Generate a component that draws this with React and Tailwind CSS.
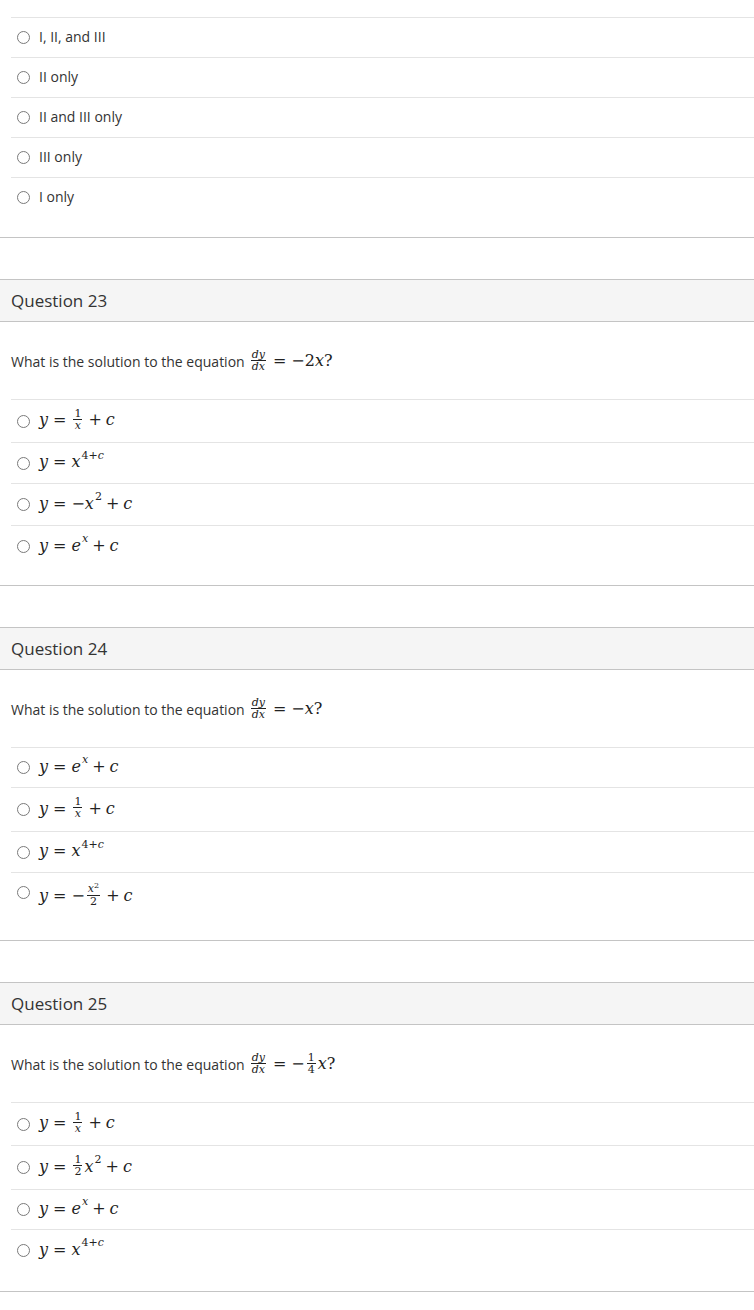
const sans = "font-['Open_Sans']";

function Radio({ className = "" }) {
  return (
    <span
      className={`inline-block w-[13px] h-[13px] rounded-full border border-[#7a7a7a] bg-white shrink-0 ${className}`}
    />
  );
}

// math helpers
function M({ children }) {
  return (
    <span className="inline-flex items-center font-['DejaVu_Serif'] font-normal text-[16px] leading-none text-[#222]">
      {children}
    </span>
  );
}
const V = ({ children }) => <span className="italic">{children}</span>;
const Op = ({ children, wide }) => (
  <span className={wide ? "mx-[5px]" : "mx-[4px]"}>{children}</span>
);
const Sup = ({ children }) => (
  <span className="text-[11px] relative -top-[7px] ml-[1px]">{children}</span>
);
function Frac({ top, bottom }) {
  return (
    <span className="inline-flex flex-col items-center text-[11px] leading-[11px] mx-[2px] relative -top-[1px]">
      <span className="px-[1px]">{top}</span>
      <span className="self-stretch border-t border-[#222]" />
      <span className="px-[1px]">{bottom}</span>
    </span>
  );
}

function Answer({ h, children, radioClass }) {
  return (
    <div
      className={`flex items-center border-t border-[#e4e4e4] pl-[6px] gap-[9px] ${h}`}
    >
      <Radio className={radioClass} />
      <div className="text-[14px] flex items-center -mt-[2px]">{children}</div>
    </div>
  );
}

function Question({ num, prompt, answers, lastPad }) {
  return (
    <div className="mt-[41px]">
      <div className="h-[43px] border-y border-[#c4c4c4] bg-[#f5f5f5] px-[11px] flex items-center text-[17px]">
        Question {num}
      </div>
      <div className={`border-b border-[#c4c4c4] ${lastPad}`}>
        <div className="h-[77px] pt-[29px] px-[11px]">
          <div className="h-[20px] flex items-center text-[14px]">
            <span className="mr-[4px]">What is the solution to the equation</span>
            {prompt}
          </div>
        </div>
        <div className="ml-[11px]">
          {answers.map((a, i) => (
            <Answer key={i} h={a.h} radioClass={a.radioClass}>
              {a.content}
            </Answer>
          ))}
        </div>
      </div>
    </div>
  );
}

const dydx = <Frac top={<V>dy</V>} bottom={<V>dx</V>} />;

const yEq = (
  <>
    <V>y</V>
    <Op wide>=</Op>
  </>
);

const oneOverX = (
  <M>
    {yEq}
    <Frac top="1" bottom={<V>x</V>} />
    <Op>+</Op>
    <V>c</V>
  </M>
);
const xPow = (
  <M>
    {yEq}
    <V>x</V>
    <Sup>
      4+<V>c</V>
    </Sup>
  </M>
);
const eX = (
  <M>
    {yEq}
    <V>e</V>
    <Sup>
      <V>x</V>
    </Sup>
    <Op>+</Op>
    <V>c</V>
  </M>
);

export default function App() {
  return (
    <div className={`${sans} w-[754px] min-h-[1310px] bg-white text-[#333]`}>
      {/* tail of question 22 */}
      <div className="pt-[17px] pb-[20px] border-b border-[#c4c4c4]">
        <div className="ml-[11px]">
          {["I, II, and III", "II only", "II and III only", "III only", "I only"].map(
            (t) => (
              <Answer key={t} h="h-[40px]">
                {t}
              </Answer>
            )
          )}
        </div>
      </div>

      <Question
        num={23}
        prompt={
          <M>
            {dydx}
            <Op wide>=</Op>
            <span>−2</span>
            <V>x</V>
            <span>?</span>
          </M>
        }
        lastPad="pb-[18px]"
        answers={[
          { h: "h-[43px]", content: oneOverX },
          { h: "h-[41px]", content: xPow },
          {
            h: "h-[42px]",
            content: (
              <M>
                {yEq}
                <span>−</span>
                <V>x</V>
                <Sup>2</Sup>
                <Op>+</Op>
                <V>c</V>
              </M>
            ),
          },
          { h: "h-[42px]", content: eX },
        ]}
      />

      <Question
        num={24}
        prompt={
          <M>
            {dydx}
            <Op wide>=</Op>
            <span>−</span>
            <V>x</V>
            <span>?</span>
          </M>
        }
        lastPad="pb-[20px]"
        answers={[
          { h: "h-[40px]", content: eX },
          { h: "h-[44px]", content: oneOverX },
          { h: "h-[41px]", content: xPow },
          {
            h: "h-[48px]",
            radioClass: "-mt-[8px]",
            content: (
              <M>
                {yEq}
                <span>−</span>
                <Frac
                  top={
                    <>
                      <V>x</V>
                      <span className="text-[8px] relative -top-[4px]">2</span>
                    </>
                  }
                  bottom="2"
                />
                <Op>+</Op>
                <V>c</V>
              </M>
            ),
          },
        ]}
      />

      <Question
        num={25}
        prompt={
          <M>
            {dydx}
            <Op wide>=</Op>
            <span>−</span>
            <Frac top="1" bottom="4" />
            <V>x</V>
            <span>?</span>
          </M>
        }
        lastPad="pb-[20px]"
        answers={[
          { h: "h-[43px]", content: oneOverX },
          {
            h: "h-[44px]",
            content: (
              <M>
                {yEq}
                <Frac top="1" bottom="2" />
                <V>x</V>
                <Sup>2</Sup>
                <Op>+</Op>
                <V>c</V>
              </M>
            ),
          },
          { h: "h-[40px]", content: eX },
          { h: "h-[42px]", content: xPow },
        ]}
      />
    </div>
  );
}
